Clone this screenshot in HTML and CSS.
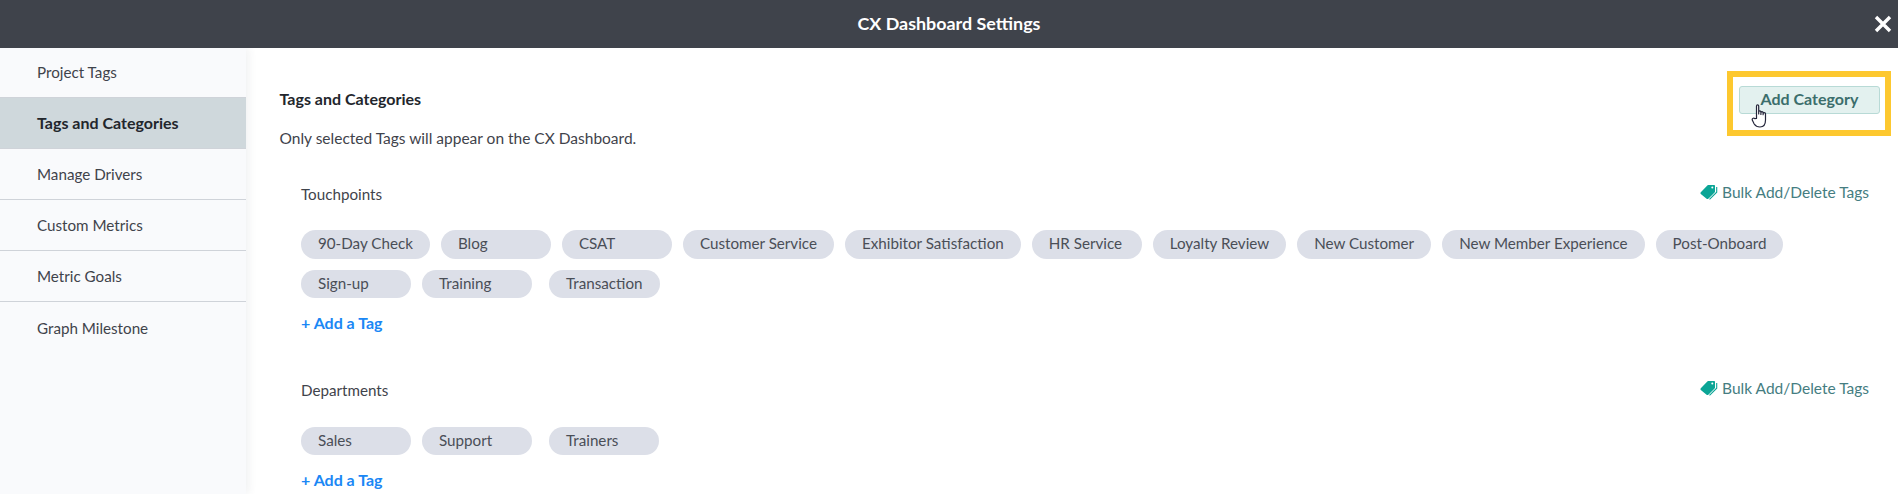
FILE: index.html
```html
<!DOCTYPE html>
<html lang="en">
<head>
<meta charset="utf-8">
<title>CX Dashboard Settings</title>
<link rel="stylesheet" href="styles.css">
</head>
<body>
<header class="topbar">
  <h1 class="topbar-title">CX Dashboard Settings</h1>
  <button class="close" aria-label="Close">
    <svg width="18" height="18" viewBox="0 0 18 18"><path d="M2 2 16 16M16 2 2 16" stroke="#fff" stroke-width="3.4" fill="none"/></svg>
  </button>
</header>
<div class="layout">
  <nav class="sidebar">
    <a class="nav-item">Project Tags</a>
    <a class="nav-item active">Tags and Categories</a>
    <a class="nav-item">Manage Drivers</a>
    <a class="nav-item">Custom Metrics</a>
    <a class="nav-item">Metric Goals</a>
    <a class="nav-item">Graph Milestone</a>
  </nav>
  <main class="content">
    <div class="head-row">
      <h2 class="section-title">Tags and Categories</h2>
      <div class="highlight">
        <button class="add-category">Add Category</button>
        <svg class="hand" width="17" height="24" viewBox="0 0 16 24"><path d="M5 14.500V2.200c0-1.800 2.200-1.800 2.200 0V10V8c0-1.500 2.200-1.500 2.200 0v2.500-1.800c0-1.400 2.200-1.400 2.200 0v2-1c0-1.400 2.400-1.400 2.400 0v6.300c0 4.200-1.900 7-5.500 7-3.200 0-4.500-1-5.800-3L1 16.500c-1-1.700 1-3.300 2.300-1.900z" fill="#fff" stroke="#23253a" stroke-width="1.200" stroke-linejoin="round"/></svg>
      </div>
    </div>
    <p class="hint">Only selected Tags will appear on the CX Dashboard.</p>

    <section class="category first">
      <div class="cat-head">
        <h3 class="cat-name">Touchpoints</h3>
        <a class="bulk"><svg width="18" height="16" viewBox="0 0 18 16"><path d="M9.500 15.300 16.700 8.200V3" fill="none" stroke="#0ba596" stroke-width="1.100"/><path d="M.8 8.200 7.600 1.300C7.900 1 8.200.9 8.600.9h5.400c.6 0 1 .4 1 1v5.500c0 .4-.1.700-.4 1L8.300 14.700c-.5.500-1.200.500-1.700 0L.8 9.900c-.5-.5-.5-1.200 0-1.700z" fill="#0ba596"/><circle cx="12.300" cy="3.600" r="1" fill="#fff"/></svg>Bulk Add/Delete Tags</a>
      </div>
      <div class="pills">
        <span class="pill">90-Day Check</span>
        <span class="pill">Blog</span>
        <span class="pill">CSAT</span>
        <span class="pill">Customer Service</span>
        <span class="pill">Exhibitor Satisfaction</span>
        <span class="pill">HR Service</span>
        <span class="pill">Loyalty Review</span>
        <span class="pill">New Customer</span>
        <span class="pill">New Member Experience</span>
        <span class="pill">Post-Onboard</span>
        <span class="pill">Sign-up</span>
        <span class="pill">Training</span>
        <span class="pill shifted">Transaction</span>
      </div>
      <a class="add-tag">+ Add a Tag</a>
    </section>

    <section class="category">
      <div class="cat-head">
        <h3 class="cat-name">Departments</h3>
        <a class="bulk"><svg width="18" height="16" viewBox="0 0 18 16"><path d="M9.500 15.300 16.700 8.200V3" fill="none" stroke="#0ba596" stroke-width="1.100"/><path d="M.8 8.200 7.600 1.300C7.900 1 8.200.9 8.600.9h5.400c.6 0 1 .4 1 1v5.500c0 .4-.1.700-.4 1L8.300 14.700c-.5.500-1.200.500-1.700 0L.8 9.900c-.5-.5-.5-1.200 0-1.700z" fill="#0ba596"/><circle cx="12.300" cy="3.600" r="1" fill="#fff"/></svg>Bulk Add/Delete Tags</a>
      </div>
      <div class="pills">
        <span class="pill">Sales</span>
        <span class="pill">Support</span>
        <span class="pill shifted">Trainers</span>
      </div>
      <a class="add-tag">+ Add a Tag</a>
    </section>
  </main>
</div>
</body>
</html>
```
FILE: styles.css
```css
* { box-sizing: border-box; }
html, body { margin: 0; height: 100%; overflow: hidden; }
body { font-family: "Lato", "Liberation Sans", sans-serif; font-size: 15.5px; color: #3f434b; background: #fff; }
.topbar { height: 48px; background: #3f434b; display: flex; align-items: center; justify-content: center; position: relative; }
.topbar-title { margin: 0 0 2px; color: #fff; font-size: 17.9px; font-weight: 700; }
.close { position: absolute; left: 1874px; top: 15px; padding: 0; border: 0; background: none; display: block; line-height: 0; }
.layout { display: flex; height: 446px; }
.sidebar { width: 246px; flex: none; background: #f9fafc; box-shadow: 3px 0 8px rgba(60, 70, 90, .07); }
.nav-item { display: flex; align-items: center; height: 51px; padding-left: 37px; border-bottom: 1px solid #cfd3d9; color: #3f434b; font-size: 15.2px; }
.nav-item:last-child { border-bottom: 0; }
.nav-item:first-child { height: 50px; padding-bottom: 2px; }
.nav-item.active { background: #cfd8dc; color: #22262c; font-weight: 700; font-size: 16px; padding-bottom: 2px; }
.content { flex: 1; padding: 23px 0 0 33.5px; overflow: hidden; }
.head-row { display: flex; justify-content: space-between; height: 65px; padding-right: 7px; }
.section-title { margin: 19px 0 0; font-size: 16px; line-height: 18px; font-weight: 700; color: #22262c; }
.highlight { position: relative; width: 164px; height: 65px; border: 6px solid #fdc82f; padding: 9px 5px 0 6px; }
.add-category { display: block; width: 141px; height: 28px; padding: 0 0 3px; border: 1px solid #b8dad6; border-radius: 3px; background: #e3f1ef; color: #3b6e6c; font: 700 16px "Lato", sans-serif; }
.hand { position: absolute; left: 18px; top: 27px; }
.hint { height: 18px; line-height: 18px; margin: -7px 0 0; }
.category { padding-left: 21.5px; padding-right: 29px; }
.category.first { margin-top: 38.5px; }
.category + .category { margin-top: 49px; }
.cat-head { display: flex; justify-content: space-between; height: 18px; }
.cat-name { margin: 0; font-size: 15.2px; line-height: 16px; font-weight: 400; color: #3f434b; }
.bulk { display: flex; align-items: center; gap: 4px; height: 18px; color: #457d81; position: relative; top: -3px; }
.pills { display: flex; flex-wrap: wrap; gap: 11px; margin-top: 26.5px; }
.pill { min-width: 110px; height: 28.5px; padding: 0 17px; border-radius: 15px; background: #dcdfe8; line-height: 27px; color: #4a4e57; font-size: 15.2px; white-space: nowrap; }
.pill.shifted { margin-left: 6px; }
.add-tag { display: block; height: 18px; margin-top: 17px; line-height: 16px; color: #1a87f5; font-weight: 700; font-size: 16px; }
```
